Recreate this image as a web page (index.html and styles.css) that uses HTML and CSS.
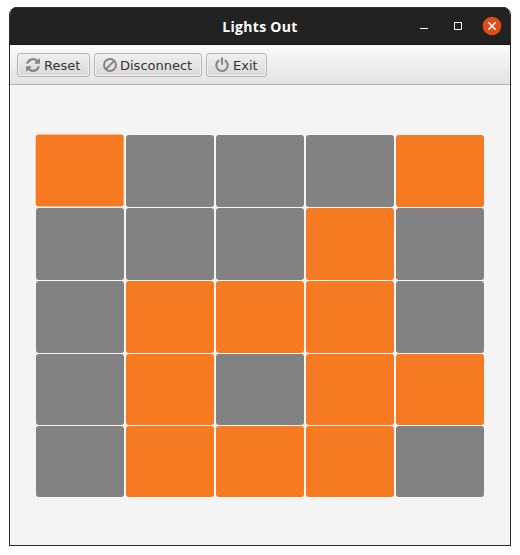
FILE: index.html
```html
<!DOCTYPE html>
<html lang="en">
<head>
<meta charset="utf-8">
<title>Lights Out</title>
<link rel="stylesheet" href="styles.css">
</head>
<body>
<main class="window">
  <header class="titlebar">
    <h1 class="title">Lights Out</h1>
    <div class="controls">
      <svg class="control" viewBox="0 0 20 20"><path d="M6 12.500h8" stroke="#fff"/></svg>
      <svg class="control" viewBox="0 0 20 20"><path d="M6.500 6.500h7v7h-7z" fill="none" stroke="#fff"/></svg>
      <svg class="control" viewBox="0 0 20 20"><circle cx="10" cy="10" r="9.300" fill="#e04b16"/><path d="M6.300 6.300l7.400 7.400M13.700 6.300l-7.400 7.400" stroke="#fff" stroke-width="1.500"/></svg>
    </div>
  </header>
  <nav class="toolbar">
    <button class="button reset"><svg class="icon" viewBox="0 128 1536 1536"><path fill="currentColor" d="M1511 1056q0 5-1 7-64 268-268 434.500t-478 166.500q-146 0-282.500-55t-243.500-157l-129 129q-19 19-45 19t-45-19-19-45v-448q0-26 19-45t45-19h448q26 0 45 19t19 45-19 45l-137 137q71 66 161 102t187 36q134 0 250-65t186-179q11-17 53-117 8-23 30-23h192q13 0 22.500 9.500t9.500 22.500zm25-800v448q0 26-19 45t-45 19h-448q-26 0-45-19t-19-45 19-45l138-138q-148-137-349-137-134 0-250 65t-186 179q-11 17-53 117-8 23-30 23h-199q-13 0-22.500-9.500t-9.500-22.500v-7q65-268 270-434.500t480-166.500q146 0 284 55.500t245 156.500l130-129q19-19 45-19t45 19 19 45z"/></svg><span class="label">Reset</span></button>
    <button class="button disconnect"><svg class="icon" viewBox="0 0 14 14"><circle cx="7" cy="7" r="6" fill="none" stroke="currentColor" stroke-width="2"/><path d="M2.900 11.100l8.200-8.200" stroke="currentColor" stroke-width="2"/></svg><span class="label">Disconnect</span></button>
    <button class="button exit"><svg class="icon" viewBox="0 0 14 14"><path d="M3.600 2.700a5.700 5.700 0 1 0 6.800 0M7 .4v5.600" fill="none" stroke="currentColor" stroke-width="2.100" stroke-linecap="round"/></svg><span class="label">Exit</span></button>
  </nav>
  <section class="board">
    <i class="cell on hover"></i><i class="cell"></i><i class="cell"></i><i class="cell"></i><i class="cell on"></i>
    <i class="cell"></i><i class="cell"></i><i class="cell"></i><i class="cell on"></i><i class="cell"></i>
    <i class="cell"></i><i class="cell on"></i><i class="cell on"></i><i class="cell on"></i><i class="cell"></i>
    <i class="cell"></i><i class="cell on"></i><i class="cell"></i><i class="cell on"></i><i class="cell on"></i>
    <i class="cell"></i><i class="cell on"></i><i class="cell on"></i><i class="cell on"></i><i class="cell"></i>
  </section>
</main>
</body>
</html>
```
FILE: styles.css
```css
* { box-sizing: border-box; }

body {
  margin: 0;
  padding: 7px 9px;
  background: #fff;
  overflow: hidden;
}

.window {
  width: 502px;
  height: 539px;
  display: flex;
  flex-direction: column;
  border: 1px solid #2b292c;
  border-top: 0;
  border-radius: 8px 8px 0 0;
  background: #f4f4f4;
  overflow: hidden;
}

.titlebar {
  flex: none;
  height: 38px;
  display: grid;
  grid-template-columns: 1fr auto 1fr;
  align-items: center;
  background: #222;
  border-top: 1px solid #303030;
  border-bottom: 1px solid #181818;
}

.title {
  grid-column: 2;
  margin: 0;
  padding-top: 2px;
  color: #fff;
  font: bold 14px/20px "Open Sans", "Noto Sans", sans-serif;
  letter-spacing: 0.3px;
}

.controls {
  display: flex;
  justify-content: flex-end;
  gap: 14px;
  padding-right: 8px;
}

.control { display: block; width: 20px; height: 20px; }

.toolbar {
  flex: none;
  height: 40px;
  display: flex;
  gap: 4px;
  padding: 8px 7px;
  background: linear-gradient(#fafafa, #e3e3e3);
  border-bottom: 1px solid #b3b3b3;
}

.button {
  height: 24px;
  display: flex;
  align-items: center;
  gap: 4px;
  padding: 0 0 0 8px;
  border: 1px solid #b5b5b5;
  border-radius: 3px;
  background: linear-gradient(#efefef, #d9d9d9);
  box-shadow: inset 0 0 0 1px #f1f1f1;
  color: #333;
  font: 13px/20px "DejaVu Sans", sans-serif;
  white-space: nowrap;
}

.label { padding-top: 2px; }

.reset { width: 73px; }
.disconnect { width: 108px; gap: 3px; }
.exit { width: 61px; }

.icon { flex: none; width: 14px; height: 14px; color: #868686; overflow: visible; }

.board {
  display: grid;
  grid-template-columns: repeat(5, 88px);
  grid-template-rows: repeat(3, 72px) repeat(2, 71px);
  gap: 1px 2px;
  padding: 50px 26px 0;
}

.cell { border-radius: 3px; background: #828282; }
.on { background: #f57a21; }
.hover { transform: translate(-0.3px, -0.5px); }
```
